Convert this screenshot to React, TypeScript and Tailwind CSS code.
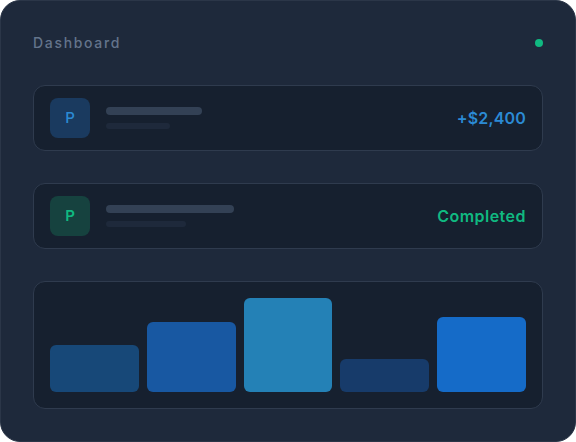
import React from 'react'

const bars = [
  { h: '50%', color: 'bg-[#174878]' },
  { h: '75%', color: 'bg-[#1858a2]' },
  { h: '100%', color: 'bg-[#2481b6]' },
  { h: '35%', color: 'bg-[#173b6a]' },
  { h: '80%', color: 'bg-[#156bc8]' },
]

export default function App() {
  return (
    <div className="w-[576px] h-[442px] bg-white" style={{ fontFamily: 'Inter, "Open Sans", sans-serif' }}>
      <div className="h-full w-full rounded-[20px] border border-[#2b3648] bg-[#1e293b] p-8 flex flex-col">
        {/* Header */}
        <div className="flex items-center justify-between h-5">
          <span className="text-sm font-medium tracking-[0.12em] text-[#64748b]">Dashboard</span>
          <span className="w-2 h-2 rounded-full bg-[#10b981]" />
        </div>

        {/* Payment row */}
        <div className="mt-8 flex items-center rounded-xl border border-[#2f3b4e] bg-[#16202f] px-4 py-3">
          <div className="w-10 h-10 rounded-lg bg-[#1a3a5f] flex items-center justify-center text-[15px] font-medium text-[#2b8ad4]">
            P
          </div>
          <div className="ml-4 flex flex-col gap-2">
            <div className="w-24 h-2 rounded-full bg-[#334155]" />
            <div className="w-16 h-1.5 rounded-full bg-[#1e293b]" />
          </div>
          <span className="ml-auto text-base font-semibold tracking-[0.01em] text-[#2b8ad4]">+$2,400</span>
        </div>

        {/* Status row */}
        <div className="mt-8 flex items-center rounded-xl border border-[#2f3b4e] bg-[#16202f] px-4 py-3">
          <div className="w-10 h-10 rounded-lg bg-[#16423f] flex items-center justify-center text-[15px] font-semibold text-[#10b981]">
            P
          </div>
          <div className="ml-4 flex flex-col gap-2">
            <div className="w-32 h-2 rounded-full bg-[#334155]" />
            <div className="w-20 h-1.5 rounded-full bg-[#1e293b]" />
          </div>
          <span className="ml-auto text-base font-semibold tracking-[0.03em] text-[#10b981]">Completed</span>
        </div>

        {/* Chart */}
        <div className="mt-8 h-32 rounded-xl border border-[#2f3b4e] bg-[#16202f] p-4 flex items-end gap-2">
          {bars.map((b, i) => (
            <div key={i} className={`flex-1 rounded-md ${b.color}`} style={{ height: b.h }} />
          ))}
        </div>
      </div>
    </div>
  )
}
